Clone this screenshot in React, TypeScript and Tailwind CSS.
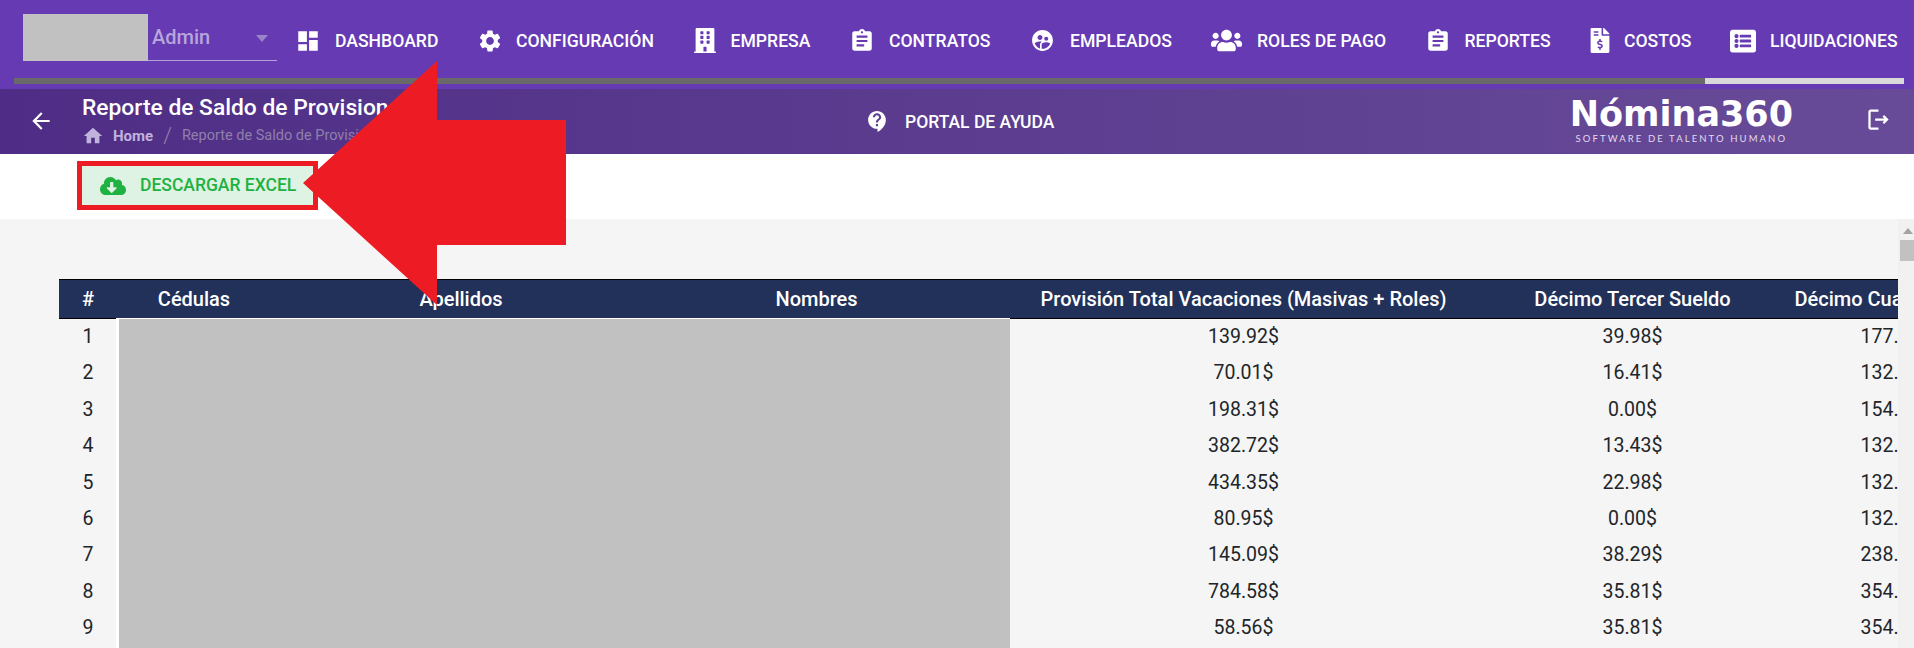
import React from "react";
import { MdDashboard, MdSettings, MdAssignment, MdSupervisedUserCircle, MdContactSupport, MdOutlineLogout, MdHome, MdArrowBack } from "react-icons/md";
import { FaBuilding, FaUsers, FaFileInvoiceDollar, FaListAlt, FaCloudDownloadAlt } from "react-icons/fa";

const nav = [
  { label: "DASHBOARD", icon: <MdDashboard className="w-[26px] h-[26px] shrink-0" />, box: "w-[19px]", item: "w-[181px] gap-[18px]" },
  { label: "CONFIGURACIÓN", icon: <MdSettings className="w-[26px] h-[26px] shrink-0" />, box: "w-[21px]", item: "w-[214.5px] gap-[16px]" },
  { label: "EMPRESA", icon: <FaBuilding className="w-[22px] h-[25px] shrink-0" />, box: "w-[22px]", item: "w-[158.5px] gap-[15px]" },
  { label: "CONTRATOS", icon: <MdAssignment className="w-[26px] h-[26px] shrink-0" />, box: "w-[20px]", item: "w-[180px] gap-[17px]" },
  { label: "EMPLEADOS", icon: <MdSupervisedUserCircle className="w-[25px] h-[25px] shrink-0" />, box: "w-[21px]", item: "w-[179px] gap-[17px]" },
  { label: "ROLES DE PAGO", icon: <FaUsers className="w-[31px] h-[25px] shrink-0" />, box: "w-[31px]", item: "w-[216.5px] gap-[15px]" },
  { label: "REPORTES", icon: <MdAssignment className="w-[26px] h-[26px] shrink-0" />, box: "w-[20px]", item: "w-[162.5px] gap-[17px]" },
  { label: "COSTOS", icon: <FaFileInvoiceDollar className="w-[20px] h-[25px] shrink-0" />, box: "w-[20px]", item: "w-[140px] gap-[14px]" },
  { label: "LIQUIDACIONES", icon: <FaListAlt className="w-[26px] h-[26px] shrink-0" />, box: "w-[26px]", item: "gap-[14px]" },
];

const rows = [
  ["139.92$", "39.98$", "177.14$"],
  ["70.01$", "16.41$", "132.50$"],
  ["198.31$", "0.00$", "154.20$"],
  ["382.72$", "13.43$", "132.50$"],
  ["434.35$", "22.98$", "132.50$"],
  ["80.95$", "0.00$", "132.50$"],
  ["145.09$", "38.29$", "238.50$"],
  ["784.58$", "35.81$", "354.00$"],
  ["58.56$", "35.81$", "354.00$"],
];

export default function App() {
  return (
    <div className="relative flex flex-col w-[1914px] h-[648px] overflow-hidden bg-[#f5f5f5] font-['Roboto',sans-serif]">
      <header className="flex flex-col h-[89px] bg-[#663ab3] shrink-0">
        <div className="flex items-center h-[78px] pt-[4px] pl-[29px]">
          <div className="relative flex items-center w-[248px] h-[47px] mb-[8px] pl-[123px] pt-[1px] border-b border-[#b3a0d6] shrink-0">
            <div className="absolute left-[-6px] top-0 w-[125px] h-[47px] bg-[#c1c1c1]" />
            <span className="text-[20px] font-medium text-[#b7a5db]">Admin</span>
            <svg viewBox="0 0 12 7" className="absolute right-[9px] top-[21px] w-[12px] h-[7px]">
              <path d="M0 0h12L6 7z" fill="#9b84c9" />
            </svg>
          </div>
          <nav className="flex items-center flex-1 ml-[21px]">
            {nav.map((n) => (
              <a key={n.label} className={`flex items-center shrink-0 text-white text-[17.6px] font-medium whitespace-nowrap ${n.item}`}>
                <span className={`flex items-center justify-center ${n.box}`}>{n.icon}</span>
                {n.label}
              </a>
            ))}
          </nav>
        </div>
        <div className="flex h-[6px] ml-[14px] mr-[10px] bg-[#696969]">
          <div className="flex-1" />
          <div className="w-[199px] bg-[#d9d9d9]" />
        </div>
      </header>

      <section className="flex items-center h-[65px] shrink-0 bg-linear-to-r from-[#4f2d86] to-[#684b98] text-white">
        <MdArrowBack className="w-[26px] h-[26px] ml-[28px] mr-[28px] mt-[-2px] shrink-0" />
        <div className="flex flex-col w-[740px] shrink-0 mt-[-2px]">
          <h1 className="text-[22.8px] leading-[28px] font-medium whitespace-nowrap">Reporte de Saldo de Provisiones</h1>
          <div className="flex items-center text-[14.5px] leading-[20px] mt-[3px]">
            <MdHome className="w-[22px] h-[22px] text-[#c0b3dc] mr-[9px]" />
            <span className="font-bold text-[15px] text-[#c0b3dc]">Home</span>
            <span className="mx-[10px] text-[22px] font-light text-[#8f80ab]">/</span>
            <span className="text-[#8f80ab]">Reporte de Saldo de Provisiones</span>
          </div>
        </div>
        <MdContactSupport className="w-[25px] h-[25px] ml-[43px] shrink-0" />
        <span className="ml-[15px] mt-[1px] text-[17.5px] font-medium whitespace-nowrap">PORTAL DE AYUDA</span>
        <div className="flex flex-col items-center ml-[515px] w-[224px] shrink-0 mt-[-2px]">
          <span className="text-[35px] leading-[36px] font-bold font-['DejaVu_Sans',sans-serif] whitespace-nowrap">Nómina360</span>
          <span className="text-[9.5px] leading-[12px] mt-[1px] tracking-[2.1px] whitespace-nowrap text-[#e3dced] font-['Lato',sans-serif]">SOFTWARE DE TALENTO HUMANO</span>
        </div>
        <MdOutlineLogout className="w-[27px] h-[27px] ml-[72px] mt-[-4px] shrink-0" />
      </section>

      <section className="flex items-center h-[65px] shrink-0 bg-white pl-[77px] pb-[2px]">
        <button className="flex items-center w-[241px] h-[49px] border-[5px] border-[#ed1c24] bg-[#def3e3] pl-[18px] gap-[14px] text-[17.5px] font-medium text-[#1fb141] whitespace-nowrap">
          <FaCloudDownloadAlt className="w-[26px] h-[26px] shrink-0" />
          DESCARGAR EXCEL
        </button>
      </section>

      <main className="relative flex flex-1 min-h-0">
        <div className="relative flex-1 min-w-0 overflow-hidden pt-[60px] pl-[59px]">
          <table className="table-fixed border-collapse w-[1970px] text-[19.5px] text-[#212529]">
            <colgroup>
              <col className="w-[58px]" />
              <col className="w-[154px]" />
              <col className="w-[380px]" />
              <col className="w-[331px]" />
              <col className="w-[523px]" />
              <col className="w-[255px]" />
              <col className="w-[269px]" />
            </colgroup>
            <thead>
              <tr className="h-[39px] bg-[#22315a] text-white border-y border-black text-[20px]">
                <th className="font-medium">#</th>
                <th className="font-medium">Cédulas</th>
                <th className="font-medium">Apellidos</th>
                <th className="font-medium">Nombres</th>
                <th className="font-medium">Provisión Total Vacaciones (Masivas + Roles)</th>
                <th className="font-medium">Décimo Tercer Sueldo</th>
                <th className="font-medium">Décimo Cuarto Sueldo</th>
              </tr>
            </thead>
            <tbody>
              {rows.map((r, i) => (
                <tr key={i} className="h-[36.4px] text-center">
                  <td>{i + 1}</td>
                  <td />
                  <td />
                  <td />
                  <td>{r[0]}</td>
                  <td>{r[1]}</td>
                  <td className="pl-[3px]">{r[2]}</td>
                </tr>
              ))}
            </tbody>
          </table>
          <div className="absolute left-[116px] top-[99px] bottom-0 w-[894px] bg-[#c1c1c1] border-l-[3px] border-t border-white" />
        </div>
        <div className="relative w-[16px] shrink-0 bg-[#f1f1f1]">
          <svg viewBox="0 0 10 6" className="absolute left-[5px] top-[9px] w-[10px] h-[6px]">
            <path d="M0 6h10L5 0z" fill="#a3a3a3" />
          </svg>
          <div className="absolute left-[2px] right-0 top-[21px] h-[21px] bg-[#c1c1c1]" />
        </div>
      </main>

      <svg viewBox="0 0 1914 648" className="absolute inset-0 w-[1914px] h-[648px] pointer-events-none">
        <polygon points="303,183 437,61 437,120 566,120 566,245 437,245 437,305" fill="#ed1c24" />
      </svg>
    </div>
  );
}
